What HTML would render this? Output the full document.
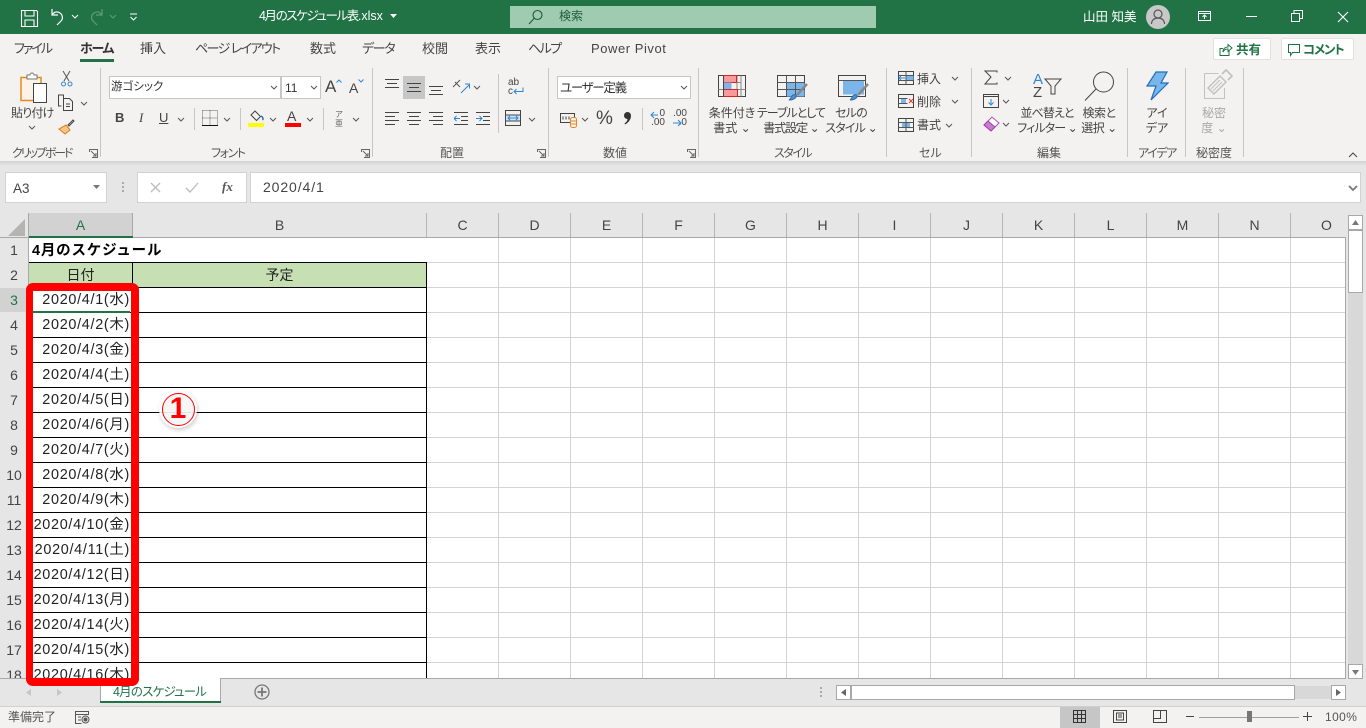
<!DOCTYPE html>
<html lang="ja"><head><meta charset="utf-8"><title>4月のスケジュール表.xlsx</title>
<style>
html,body{margin:0;padding:0;width:1366px;height:728px;overflow:hidden;background:#fff}
body{position:relative;font-family:"Liberation Sans","Noto Sans CJK JP",sans-serif;color:#444}
.a,.t,svg{position:absolute}
.t{white-space:nowrap;font-size:12px;line-height:16px;color:#444;font-feature-settings:"palt"}
.c{transform:translateX(-50%)}
.tb{font-size:13px;color:#444;top:41px}
.k{letter-spacing:-1.2px}
.g{font-size:12px;color:#555;top:145px}
.sep{position:absolute;width:1px;background:#c6c6c6;top:68px;height:89px}
.hd{position:absolute;top:213px;height:24px;line-height:25px;text-align:center;font-size:14px;color:#444;background:#e6e6e6;border-right:1px solid #b5b5b5;box-sizing:content-box}
.rh{position:absolute;left:0;width:28px;height:24px;line-height:24px;text-align:center;font-size:14px;color:#444;background:#e6e6e6}
.d{position:absolute;left:20px;width:110px;text-align:right;height:24px;line-height:24px;font-size:14.4px;color:#222;white-space:nowrap;letter-spacing:.7px}
.s{fill:none;stroke:#444;stroke-width:1}
</style></head><body>

<!-- title bar -->
<div class="a" style="left:0;top:0;width:1366px;height:34px;background:#217346"></div>
<svg style="left:20px;top:8px" width="20" height="20" viewBox="0 0 20 20" fill="none" stroke="#fff" stroke-width="1.1"><path d="M1.5 2.5h15l1 1v15h-16z"/><path d="M5 2.500v5.500h9v-5.500M5 18.500v-6.500h9v6.500"/></svg>
<svg style="left:50px;top:8px" width="16" height="19" viewBox="0 0 16 19" fill="none" stroke="#fff" stroke-width="1.2"><path d="M2 1v6h6"/><path d="M2 7c2-3 5-4 8-2 3 2 3 6 1 8l-4 4"/></svg>
<svg style="left:71px;top:14px" width="8" height="5" fill="none" stroke="#fff"><path d="M1 1l3 3 3-3"/></svg>
<svg style="left:88px;top:8px" width="16" height="19" viewBox="0 0 16 19" fill="none" stroke="#5d9c78" stroke-width="1.2"><path d="M14 1v6h-6"/><path d="M14 7c-2-3-5-4-8-2-3 2-3 6-1 8l4 4"/></svg>
<svg style="left:109px;top:14px" width="8" height="5" fill="none" stroke="#5d9c78"><path d="M1 1l3 3 3-3"/></svg>
<svg style="left:129px;top:13px" width="9" height="8" fill="none" stroke="#fff"><path d="M1 1h7M1.500 4l3 3 3-3"/></svg>
<div class="t" style="left:259px;top:8px;color:#fff;font-size:12.5px"><span style="letter-spacing:-1.400px">4月のスケジュール表</span>.xlsx</div>
<svg style="left:390px;top:14px" width="7" height="5"><path d="M0 0h7l-3.500 4z" fill="#fff"/></svg>
<div class="a" style="left:510px;top:6px;width:366px;height:22px;background:#9fcbb1"></div>
<svg style="left:528px;top:9px" width="16" height="16" fill="none" stroke="#1a5c38" stroke-width="1.1"><circle cx="9.500" cy="6" r="4.500"/><path d="M6 9.500L1 15"/></svg>
<div class="t" style="left:559px;top:8px;color:#1f5c3a;font-size:12px">検索</div>
<div class="t" style="left:1083px;top:9px;color:#fff;font-size:12.500px">山田 知美</div>
<div class="a" style="left:1146px;top:5px;width:24px;height:24px;border-radius:50%;background:#c8c8c8"></div>
<svg style="left:1149px;top:8px" width="18" height="18" fill="none" stroke="#555" stroke-width="1.200"><circle cx="9" cy="6" r="4"/><path d="M2.500 16c0-4 3-6 6.500-6s6.500 2 6.500 6"/></svg>
<svg style="left:1198px;top:10px" width="14" height="12" fill="none" stroke="#fff"><path d="M.5 1.500h12v9h-12zM.5 3.500h12M6.500 9V5M4.500 7l2-2 2 2"/></svg>
<div class="a" style="left:1246px;top:16px;width:11px;height:1px;background:#fff"></div>
<svg style="left:1291px;top:10px" width="12" height="12" fill="none" stroke="#fff"><path d="M.5 3.500h8v8h-8zM3 3.500v-3h8.500v8h-3"/></svg>
<svg style="left:1337px;top:11px" width="12" height="12" fill="none" stroke="#fff" stroke-width="1.100"><path d="M1 1l10 10M11 1L1 11"/></svg>

<!-- ribbon -->
<div class="a" style="left:0;top:34px;width:1366px;height:127px;background:#f3f2f1"></div>
<div class="a" style="left:0;top:161px;width:1366px;height:52px;background:#e6e6e6"></div>
<div class="a" style="left:0;top:161px;width:1366px;height:5px;background:linear-gradient(#d2d2d2,#e6e6e6)"></div>
<div class="t tb" style="left:14px;letter-spacing:-2px">ファイル</div>
<div class="t tb" style="left:80px;font-weight:bold;color:#333;letter-spacing:-1.300px">ホーム</div>
<div class="a" style="left:80px;top:59px;width:34px;height:3px;background:#217346"></div>
<div class="t tb" style="left:140px">挿入</div>
<div class="t tb" style="left:195px;letter-spacing:-1.600px">ページ レイアウト</div>
<div class="t tb" style="left:310px">数式</div>
<div class="t tb" style="left:362px;letter-spacing:-1.300px">データ</div>
<div class="t tb" style="left:422px">校閲</div>
<div class="t tb" style="left:475px">表示</div>
<div class="t tb" style="left:528px;letter-spacing:-1.600px">ヘルプ</div>
<div class="t tb" style="left:591px;letter-spacing:.55px">Power Pivot</div>

<div class="a" style="left:1213px;top:38px;width:58px;height:22px;background:#fff;border:1px solid #e1e1e1;box-sizing:border-box;border-radius:2px"></div>
<svg style="left:1219px;top:43px" width="14" height="14" fill="none" stroke="#217346"><path d="M10 7.500v5h-9v-7h3"/><path d="M4 9c0-3 2-5 5-5V1.500l4 3.500-4 3.500V6C7 6 5 7 4 9z"/></svg>
<div class="t" style="left:1236px;top:42px;color:#217346;font-weight:bold;font-size:12.500px">共有</div>
<div class="a" style="left:1281px;top:38px;width:73px;height:22px;background:#fff;border:1px solid #e1e1e1;box-sizing:border-box;border-radius:2px"></div>
<svg style="left:1288px;top:44px" width="13" height="13" fill="none" stroke="#217346"><path d="M.5.500h11v8h-7l-2 3v-3h-2z"/></svg>
<div class="t" style="left:1303px;top:42px;color:#217346;font-weight:bold;font-size:12.500px;letter-spacing:-1.200px">コメント</div>

<!-- ribbon separators -->
<div class="sep" style="left:100px"></div><div class="sep" style="left:372px"></div><div class="sep" style="left:548px"></div><div class="sep" style="left:698px"></div><div class="sep" style="left:886px"></div><div class="sep" style="left:971px"></div><div class="sep" style="left:1127px"></div><div class="sep" style="left:1185px"></div><div class="sep" style="left:1243px"></div>
<div class="sep" style="left:194px;top:108px;height:22px"></div><div class="sep" style="left:240px;top:108px;height:22px"></div><div class="sep" style="left:323px;top:108px;height:22px"></div><div class="sep" style="left:498px;top:74px;height:59px"></div><div class="sep" style="left:642px;top:108px;height:22px"></div>

<!-- clipboard -->
<svg style="left:20px;top:71px" width="28" height="32" fill="none"><path d="M1 6.500h20v23H1z" stroke="#e8891e" stroke-width="1.500" fill="#fbf3e8"/><path d="M7 6V4h3a2 2 0 0 1 4 0h3v4H7z" fill="#fff" stroke="#777"/><path d="M13.500 12.500h13v19h-13z" fill="#fff" stroke="#444"/></svg>
<div class="t" style="left:11px;top:105px;font-size:12px;letter-spacing:-.8px">貼り付け</div>
<svg style="left:28px;top:125px" width="8" height="5" fill="none" stroke="#555"><path d="M1 1l3 3 3-3"/></svg>
<svg style="left:60px;top:70px" width="14" height="18" fill="none" stroke="#555"><path d="M3 1l6 10M10 1L4 11"/><circle cx="3.500" cy="14" r="2" stroke="#2b88d8"/><circle cx="10" cy="14" r="2" stroke="#2b88d8"/></svg>
<svg style="left:57px;top:94px" width="18" height="18" fill="none" stroke="#444"><path d="M6.500 5.500V1h-5v11h3"/><path d="M6.500 4.500h6l3 3v9h-9zM9 10h4M9 12.500h4"/></svg>
<svg style="left:80px;top:101px" width="8" height="5" fill="none" stroke="#555"><path d="M1 1l3 3 3-3"/></svg>
<svg style="left:58px;top:118px" width="17" height="17" fill="none"><path d="M1 11l7-4 4 5-5 4z" fill="#f6c58a" stroke="#d97c10"/><path d="M10 7l5-5 1 1-5 5z" stroke="#444"/></svg>
<div class="t g" style="left:12px;letter-spacing:-2.100px">クリップボード</div>
<svg style="left:89px;top:149px" width="9" height="9" fill="none" stroke="#666"><path d="M.500 3V.500H8.500V8.500H3M2 2l5 5M4 7h3V4"/></svg>

<!-- font -->
<div class="a" style="left:109px;top:76px;width:172px;height:23px;background:#fff;border:1px solid #c6c6c6;box-sizing:border-box"></div>
<div class="t" style="left:111px;top:79px;font-size:11.500px;color:#333">游ゴシック</div>
<svg style="left:270px;top:85px" width="8" height="5" fill="none" stroke="#555"><path d="M1 1l3 3 3-3"/></svg>
<div class="a" style="left:281px;top:76px;width:40px;height:23px;background:#fff;border:1px solid #c6c6c6;box-sizing:border-box"></div>
<div class="t" style="left:285px;top:80px;font-size:12px;color:#333">11</div>
<svg style="left:310px;top:85px" width="8" height="5" fill="none" stroke="#555"><path d="M1 1l3 3 3-3"/></svg>
<div class="t" style="left:325px;top:77px;font-size:17px;line-height:20px">A</div>
<svg style="left:336px;top:79px" width="6" height="4" fill="none" stroke="#2b88d8"><path d="M.5 3.500l2.500-2.500 2.500 2.500"/></svg>
<div class="t" style="left:349px;top:79px;font-size:14px;line-height:18px">A</div>
<svg style="left:358px;top:79px" width="6" height="4" fill="none" stroke="#2b88d8"><path d="M.5.500l2.500 2.500 2.500-2.500"/></svg>
<div class="t" style="left:115px;top:110px;font-weight:bold;font-size:13px;font-family:'Liberation Sans',sans-serif">B</div>
<div class="t" style="left:139px;top:110px;font-style:italic;font-size:13px;font-family:'Liberation Serif',serif">I</div>
<div class="t" style="left:159px;top:110px;font-size:13px;text-decoration:underline">U</div>
<svg style="left:177px;top:117px" width="8" height="5" fill="none" stroke="#555"><path d="M1 1l3 3 3-3"/></svg>
<svg style="left:202px;top:110px" width="16" height="16"><path d="M.5.500h15v15M.5.500v15M8 .500v15M.5 8h15" fill="none" stroke="#666" stroke-dasharray="1 1"/><path d="M0 15.500h16" stroke="#111"/></svg>
<svg style="left:223px;top:117px" width="8" height="5" fill="none" stroke="#555"><path d="M1 1l3 3 3-3"/></svg>
<svg style="left:249px;top:110px" width="16" height="13" fill="none" stroke="#444"><path d="M6 1l5.500 5.500-4 4L2 5z"/><path d="M12 6c2 1 2.500 3 1.500 4" stroke="#2b6cb0" stroke-width="1.500"/></svg>
<div class="a" style="left:248px;top:123px;width:16px;height:4px;background:#ff0"></div>
<svg style="left:269px;top:117px" width="8" height="5" fill="none" stroke="#555"><path d="M1 1l3 3 3-3"/></svg>
<div class="t" style="left:287px;top:108px;font-size:14px;line-height:16px">A</div>
<div class="a" style="left:285px;top:123px;width:16px;height:4px;background:#f00"></div>
<svg style="left:306px;top:117px" width="8" height="5" fill="none" stroke="#555"><path d="M1 1l3 3 3-3"/></svg>
<div class="t" style="left:335px;top:110px;font-size:8px;line-height:9px;color:#666;text-align:center">ア<br>亜</div>
<svg style="left:352px;top:117px" width="8" height="5" fill="none" stroke="#555"><path d="M1 1l3 3 3-3"/></svg>
<div class="t g" style="left:211px;letter-spacing:-1.400px">フォント</div>
<svg style="left:361px;top:149px" width="9" height="9" fill="none" stroke="#666"><path d="M.500 3V.500H8.500V8.500H3M2 2l5 5M4 7h3V4"/></svg>

<!-- align -->
<div class="a" style="left:403px;top:76px;width:22px;height:23px;background:#c6c6c6"></div>
<svg style="left:385px;top:76px" width="60" height="24" fill="none" stroke="#444"><path d="M0 3.500h14M2 7.500h10M0 11.500h14"/><path d="M22 7.500h14M24 11.500h10M22 15.500h14"/><path d="M44 10.500h14M46 14.500h10M44 18.500h14"/></svg>
<svg style="left:385px;top:112px" width="60" height="14" fill="none" stroke="#444"><path d="M0 .500h14M0 4.500h10M0 8.500h14M0 12.500h10"/><path d="M22 .500h14M24 4.500h10M22 8.500h14M24 12.500h10"/><path d="M44 .500h14M48 4.500h10M44 8.500h14M48 12.500h10"/></svg>
<svg style="left:452px;top:78px" width="20" height="18" fill="none" stroke="#555"><path d="M1 9l7-7M3 4l5 5"/><path d="M9 15l8-8M13 6h4.500v4.500" stroke="#2b88d8"/></svg>
<svg style="left:473px;top:85px" width="8" height="5" fill="none" stroke="#555"><path d="M1 1l3 3 3-3"/></svg>
<svg style="left:454px;top:112px" width="36" height="14" fill="none" stroke="#444"><path d="M0 .500h14M7 4.500h7M7 8.500h7M0 12.500h14"/><path d="M22 .500h14M29 4.500h7M29 8.500h7M22 12.500h14"/><path d="M6 6.500H0M2.500 4L0 6.500 2.500 9M22 6.500h6M25.500 4l2.500 2.500L25.500 9" stroke="#2b88d8"/></svg>
<div class="t" style="left:508px;top:78px;font-size:10px;line-height:9px;color:#444">ab<br>c</div>
<svg style="left:512px;top:87px" width="12" height="9" fill="none" stroke="#2b88d8"><path d="M11 .500v4H2M4.500 2L2 4.500 4.500 7"/></svg>
<svg style="left:505px;top:110px" width="17" height="16" fill="none" stroke="#444"><path d="M.5.500h15v15H.5z"/><path d="M.5 5h15M.5 11h15"/><path d="M1 5.500h14v5H1z" fill="#cfe4f7" stroke="none"/><path d="M3 8h10M5 6l-2 2 2 2M11 6l2 2-2 2" stroke="#2b88d8"/></svg>
<svg style="left:528px;top:117px" width="8" height="5" fill="none" stroke="#555"><path d="M1 1l3 3 3-3"/></svg>
<div class="t g" style="left:440px">配置</div>
<svg style="left:537px;top:149px" width="9" height="9" fill="none" stroke="#666"><path d="M.500 3V.500H8.500V8.500H3M2 2l5 5M4 7h3V4"/></svg>

<!-- number -->
<div class="a" style="left:557px;top:76px;width:134px;height:23px;background:#fff;border:1px solid #c6c6c6;box-sizing:border-box"></div>
<div class="t" style="left:560px;top:80px;font-size:12.500px;color:#333;letter-spacing:-1.300px">ユーザー定義</div>
<svg style="left:680px;top:85px" width="8" height="5" fill="none" stroke="#555"><path d="M1 1l3 3 3-3"/></svg>
<svg style="left:560px;top:113px" width="18" height="15" fill="none" stroke="#444"><path d="M.5.500h14v9H.5z"/><path d="M3 3.500v3M6 3.500v3M9 3.500v3" /><rect x="10.500" y="4.500" width="6" height="10" rx="2" fill="#f3f2f1" stroke="#e8891e"/><path d="M10.500 8h6M10.500 11h6" stroke="#e8891e"/></svg>
<svg style="left:581px;top:117px" width="8" height="5" fill="none" stroke="#555"><path d="M1 1l3 3 3-3"/></svg>
<div class="t" style="left:596px;top:108px;font-size:19px;line-height:22px">%</div>
<svg style="left:623px;top:112px" width="10" height="14"><path d="M1 3.500a3.500 3.500 0 1 1 7 0c0 4-2.500 7-6 9l-.5-1c2-1.500 3-3 3-4.500C2.500 7 1 5.500 1 3.500z" fill="#333"/></svg>
<div class="t" style="left:640px;width:25px;top:109px;font-size:10px;line-height:9px;text-align:right;color:#444">0<br>.00</div>
<svg style="left:650px;top:111px" width="9" height="8" fill="none" stroke="#2b88d8"><path d="M8 4H1M4 1L1 4l3 3"/></svg>
<div class="t" style="left:662px;width:25px;top:109px;font-size:10px;line-height:9px;text-align:right;color:#444">.00<br>.0</div>
<svg style="left:672px;top:119px" width="10" height="8" fill="none" stroke="#2b88d8"><path d="M1 4h8M6 1l3 3-3 3"/></svg>
<div class="t g" style="left:603px">数値</div>
<svg style="left:687px;top:149px" width="9" height="9" fill="none" stroke="#666"><path d="M.500 3V.500H8.500V8.500H3M2 2l5 5M4 7h3V4"/></svg>

<!-- styles -->
<svg style="left:718px;top:75px" width="28" height="22" fill="none"><path d="M.5.500h27v21H.5z" stroke="#444"/><path d="M5.500 7.500h17M.5 14.500h27M19 .500v21M23 .500v21" stroke="#888"/><path d="M5.500.500h13v7h-13z" fill="#f79a9a" stroke="#d22"/><path d="M5.500 7.500h8v7h-8z" fill="#7ab6ea"/><path d="M5.500 14.500h14v7h-14z" fill="#f79a9a" stroke="#d22"/><path d="M5.500.500v21" stroke="#444"/></svg>
<div class="t c" style="left:732px;top:105.500px;font-size:12px;line-height:15px;text-align:center">条件付き<br>書式 ⌄</div>
<svg style="left:777px;top:75px" width="32" height="27" fill="none"><path d="M.5.500h27v21H.5z" stroke="#444"/><path d="M9.500 7.500h18v14h-18z" fill="#7ab6ea"/><path d="M.5 7.500h27M.5 14.500h27M9.500.500v21M18.500.500v21" stroke="#555"/><path d="M30 9l-10 11" stroke="#888" stroke-width="2.500"/><path d="M12 25c3 0 6-1 7-3 1-2-1-3-3-2-2 1-2 4-4 5z" fill="#4a90d9" stroke="#2f6ea8"/></svg>
<div class="t c" style="left:791px;top:105.500px;font-size:12px;line-height:15px;text-align:center;letter-spacing:-1px">テーブルとして<br>書式設定 ⌄</div>
<svg style="left:838px;top:75px" width="32" height="27" fill="none"><path d="M.5.500h27v21H.5z" stroke="#444"/><path d="M5 5.500h21v14H5z" fill="#7ab6ea"/><path d="M.5 5.500h27" stroke="#555"/><path d="M30 9l-10 11" stroke="#888" stroke-width="2.500"/><path d="M12 25c3 0 6-1 7-3 1-2-1-3-3-2-2 1-2 4-4 5z" fill="#4a90d9" stroke="#2f6ea8"/></svg>
<div class="t c" style="left:851px;top:105.500px;font-size:12px;line-height:15px;text-align:center;letter-spacing:-.8px">セルの<br>スタイル ⌄</div>
<div class="t g" style="left:774px;letter-spacing:-1.500px">スタイル</div>

<!-- cells -->
<svg style="left:898px;top:71px" width="17" height="14" fill="none"><path d="M.5.500h15v13H.5z" stroke="#444"/><path d="M8 4.500h7.500v5H8z" fill="#7ab6ea"/><path d="M.5 4.500h15M.5 9.500h15M8 .500v13" stroke="#555"/><path d="M1 7h6M3 5L1 7l2 2" stroke="#2b88d8"/></svg>
<div class="t" style="left:917px;top:71px">挿入</div>
<svg style="left:951px;top:76px" width="8" height="5" fill="none" stroke="#555"><path d="M1 1l3 3 3-3"/></svg>
<svg style="left:898px;top:94px" width="17" height="14" fill="none"><path d="M.5.500h15v13H.5z" stroke="#444"/><path d="M3 4.500h5v5H3z" fill="#7ab6ea"/><path d="M.5 4.500h9M.5 9.500h9" stroke="#555"/><path d="M11 5l4 4M15 5l-4 4" stroke="#e33"/></svg>
<div class="t" style="left:917px;top:94px">削除</div>
<svg style="left:951px;top:99px" width="8" height="5" fill="none" stroke="#555"><path d="M1 1l3 3 3-3"/></svg>
<svg style="left:898px;top:117px" width="17" height="15" fill="none"><path d="M.5 1.500h15v13H.5z" stroke="#444"/><path d="M4 5.500h8v5H4z" fill="#7ab6ea"/><path d="M.5 5.500h15M.5 10.500h15M8 1.500v13" stroke="#555"/></svg>
<div class="t" style="left:917px;top:117px">書式</div>
<svg style="left:945px;top:123px" width="8" height="5" fill="none" stroke="#555"><path d="M1 1l3 3 3-3"/></svg>
<div class="t g" style="left:919px">セル</div>

<!-- editing -->
<svg style="left:984px;top:70px" width="14" height="15" fill="none" stroke="#444"><path d="M13 2.500V1H1l6 6-6 7h12v-1.500"/></svg>
<svg style="left:1004px;top:76px" width="8" height="5" fill="none" stroke="#555"><path d="M1 1l3 3 3-3"/></svg>
<svg style="left:983px;top:94px" width="16" height="14" fill="none" stroke="#444"><path d="M.5.500h15v13H.5zM.5 2.500h15"/><path d="M8 5v6M5.500 8.500L8 11l2.500-2.500" stroke="#2b88d8"/></svg>
<svg style="left:1002px;top:99px" width="8" height="5" fill="none" stroke="#555"><path d="M1 1l3 3 3-3"/></svg>
<svg style="left:983px;top:116px" width="17" height="16" fill="none"><path d="M1 9l8-8 7 6-8 8z" fill="#fff" stroke="#b14fb8"/><path d="M1 9l4-4 7 6-4 4z" fill="#c77ccb" stroke="#a13fa8"/></svg>
<svg style="left:1002px;top:122px" width="8" height="5" fill="none" stroke="#555"><path d="M1 1l3 3 3-3"/></svg>
<div class="t" style="left:1033px;top:71px;font-size:15px;line-height:17px;color:#2b88d8">A</div>
<div class="t" style="left:1033px;top:84px;font-size:15px;line-height:17px;color:#444">Z</div>
<svg style="left:1044px;top:78px" width="19" height="18" fill="none" stroke="#444"><path d="M1 1h16l-6 7v8h-4V8z"/></svg>
<div class="t c" style="left:1047px;top:105.500px;font-size:12px;line-height:15px;text-align:center;letter-spacing:-.9px">並べ替えと<br>フィルター ⌄</div>
<svg style="left:1083px;top:71px" width="32" height="32" fill="none" stroke="#444"><circle cx="20.500" cy="11" r="10"/><path d="M13 18L2 29.500"/></svg>
<div class="t c" style="left:1099px;top:105.500px;font-size:12px;line-height:15px;text-align:center;letter-spacing:-.5px">検索と<br>選択 ⌄</div>
<div class="t g" style="left:1037px">編集</div>

<!-- ideas -->
<svg style="left:1145px;top:71px" width="24" height="30"><path d="M11 1h11l-6 11h7L6 29l5-14H2z" fill="#7ab6ea" stroke="#1f6fc0" stroke-width="1.200"/></svg>
<div class="t c" style="left:1157px;top:105.500px;font-size:12px;line-height:15px;text-align:center">アイ<br>デア</div>
<div class="t g" style="left:1138px;letter-spacing:-1.400px">アイデア</div>

<!-- sensitivity -->
<svg style="left:1203px;top:69px" width="30" height="31" fill="none" stroke="#c2c2c2"><path d="M1.500 4.500h14M1.500 4.500v25h20V19"/><path d="M5 19L17 7l6 6-12 12z" stroke-width="1.500"/><path d="M8 20l9-9M10 22l9-9"/><path d="M19 5l4-4 6 6-4 4" stroke-width="1.800"/></svg>
<div class="t c" style="left:1214px;top:105.500px;font-size:12px;line-height:15px;text-align:center;color:#a9a9a9">秘密<br>度 ⌄</div>
<div class="t g" style="left:1196px">秘密度</div>
<svg style="left:1348px;top:152px" width="10" height="6" fill="none" stroke="#444"><path d="M1 5l4-4 4 4"/></svg>

<!-- formula bar -->
<div class="a" style="left:5px;top:172px;width:102px;height:31px;background:#fff;border:1px solid #d2d2d2;box-sizing:border-box"></div>
<div class="t" style="left:13px;top:181px;font-size:13.500px">A3</div>
<svg style="left:93px;top:185px" width="8" height="4"><path d="M0 0h7l-3.500 4z" fill="#777"/></svg>
<div class="a" style="left:122px;top:182px;width:2px;height:2px;background:#aaa;box-shadow:0 4px #aaa,0 8px #aaa"></div>
<div class="a" style="left:137px;top:172px;width:110px;height:31px;background:#fff;border:1px solid #d2d2d2;box-sizing:border-box"></div>
<svg style="left:150px;top:182px" width="11" height="11" fill="none" stroke="#bbb" stroke-width="1.300"><path d="M1 1l9 9M10 1l-9 9"/></svg>
<svg style="left:185px;top:182px" width="14" height="11" fill="none" stroke="#bbb" stroke-width="1.300"><path d="M1 6l4 4 8-9"/></svg>
<div class="t" style="left:222px;top:179px;font-family:'Liberation Serif',serif;font-style:italic;font-weight:bold;font-size:13px;color:#555">fx</div>
<div class="a" style="left:250px;top:172px;width:1111px;height:31px;background:#fff;border:1px solid #d2d2d2;box-sizing:border-box"></div>
<div class="t" style="left:263px;top:179px;font-size:14px;letter-spacing:.9px">2020/4/1</div>
<svg style="left:1348px;top:185px" width="10" height="7" fill="none" stroke="#777" stroke-width="1.800"><path d="M1 1l4 4 4-4"/></svg>

<!-- column headers -->
<div class="a" style="left:0;top:213px;width:1346px;height:25px;background:#e6e6e6"></div>
<svg style="left:8px;top:219px" width="18" height="17"><path d="M17 0v17H0z" fill="#b4b4b4"/></svg>
<div class="a" style="left:29px;top:213px;width:103px;height:23px;line-height:25px;text-align:center;font-size:14px;color:#217346;background:#d2d2d2;border-right:1px solid #a8a8a8">A</div>
<div class="a" style="left:29px;top:236px;width:104px;height:2px;background:#217346"></div>
<div class="hd" style="left:133px;width:293px">B</div>
<div class="hd" style="left:427px;width:71px">C</div>
<div class="hd" style="left:499px;width:71px">D</div>
<div class="hd" style="left:571px;width:71px">E</div>
<div class="hd" style="left:643px;width:71px">F</div>
<div class="hd" style="left:715px;width:71px">G</div>
<div class="hd" style="left:787px;width:71px">H</div>
<div class="hd" style="left:859px;width:71px">I</div>
<div class="hd" style="left:931px;width:71px">J</div>
<div class="hd" style="left:1003px;width:71px">K</div>
<div class="hd" style="left:1075px;width:71px">L</div>
<div class="hd" style="left:1147px;width:71px">M</div>
<div class="hd" style="left:1219px;width:71px">N</div>
<div class="hd" style="left:1291px;width:71px;border:0;width:71px;background:#e6e6e6">O</div>
<div class="a" style="left:1346px;top:213px;width:20px;height:493px;background:#e6e6e6"></div>
<div class="a" style="left:0;top:237px;width:1345px;height:1px;background:#a8a8a8"></div>
<div class="a" style="left:29px;top:236px;width:104px;height:2px;background:#217346"></div>

<!-- grid -->
<div class="a" style="left:29px;top:238px;width:1316px;height:440px;background-color:#fff;background-image:repeating-linear-gradient(to bottom,transparent 0,transparent 24px,#d4d4d4 24px,#d4d4d4 25px)"></div>
<div class="a" style="left:427px;top:238px;width:918px;height:440px;background-image:repeating-linear-gradient(to right,transparent 0,transparent 71px,#d4d4d4 71px,#d4d4d4 72px)"></div>
<div class="a" style="left:1345px;top:237px;width:1px;height:441px;background:#a8a8a8"></div>

<!-- row headers -->
<div class="a" style="left:0;top:238px;width:29px;height:440px;background:#e6e6e6"></div>
<div class="rh" style="top:238px">1</div>
<div class="rh" style="top:263px">2</div>
<div class="rh" style="top:288px;color:#217346;background:#d2d2d2">3</div>
<div class="rh" style="top:313px">4</div>
<div class="rh" style="top:338px">5</div>
<div class="rh" style="top:363px">6</div>
<div class="rh" style="top:388px">7</div>
<div class="rh" style="top:413px">8</div>
<div class="rh" style="top:438px">9</div>
<div class="rh" style="top:463px">10</div>
<div class="rh" style="top:488px">11</div>
<div class="rh" style="top:513px">12</div>
<div class="rh" style="top:538px">13</div>
<div class="rh" style="top:563px">14</div>
<div class="rh" style="top:588px">15</div>
<div class="rh" style="top:613px">16</div>
<div class="rh" style="top:638px">17</div>
<div class="rh" style="top:663px;height:15px;overflow:hidden">18</div>
<div class="a" style="left:28px;top:213px;width:1px;height:465px;background:#a8a8a8"></div>

<!-- table -->
<div class="a" style="left:29px;top:263px;width:397px;height:24px;background:#c6e0b4"></div>
<div class="a" style="left:29px;top:262px;width:398px;height:416px;background-image:repeating-linear-gradient(to bottom,#000 0,#000 1px,transparent 1px,transparent 25px)"></div>
<div class="a" style="left:132px;top:262px;width:1px;height:416px;background:#000"></div>
<div class="a" style="left:426px;top:262px;width:1px;height:416px;background:#000"></div>
<div class="a" style="left:32px;top:239px;height:24px;line-height:24px;font-weight:bold;font-size:14.500px;letter-spacing:.8px;color:#000;white-space:nowrap">4月のスケジュール</div>
<div class="a" style="left:29px;top:263px;width:103px;height:24px;line-height:24px;text-align:center;font-size:14px;color:#222">日付</div>
<div class="a" style="left:133px;top:263px;width:293px;height:24px;line-height:24px;text-align:center;font-size:14px;color:#222">予定</div>
<div class="d" style="top:288px">2020/4/1(水)</div>
<div class="d" style="top:313px">2020/4/2(木)</div>
<div class="d" style="top:338px">2020/4/3(金)</div>
<div class="d" style="top:363px">2020/4/4(土)</div>
<div class="d" style="top:388px">2020/4/5(日)</div>
<div class="d" style="top:413px">2020/4/6(月)</div>
<div class="d" style="top:438px">2020/4/7(火)</div>
<div class="d" style="top:463px">2020/4/8(水)</div>
<div class="d" style="top:488px">2020/4/9(木)</div>
<div class="d" style="top:513px">2020/4/10(金)</div>
<div class="d" style="top:538px">2020/4/11(土)</div>
<div class="d" style="top:563px">2020/4/12(日)</div>
<div class="d" style="top:588px">2020/4/13(月)</div>
<div class="d" style="top:613px">2020/4/14(火)</div>
<div class="d" style="top:638px">2020/4/15(水)</div>
<div class="d" style="top:663px;height:15px;overflow:hidden">2020/4/16(木)</div>
<div class="a" style="left:33px;top:311px;width:97px;height:2px;background:#217346"></div>

<!-- bottom bars -->
<div class="a" style="left:0;top:678px;width:1346px;height:28px;background:#e6e6e6;border-top:1px solid #a8a8a8;box-sizing:border-box"></div>
<div class="a" style="left:0;top:706px;width:1366px;height:22px;background:#f3f2f1;border-top:1px solid #d0d0d0;box-sizing:border-box"></div>
<svg style="left:26px;top:689px" width="36" height="7"><path d="M5 0v7L0 3.500zM31 0v7l5-3.500z" fill="#c6c6c6"/></svg>
<div class="a" style="left:100px;top:678px;width:121px;height:25px;background:#fff;border:1px solid #a8a8a8;border-top:0;border-bottom:0;box-sizing:border-box"></div>
<div class="a" style="left:100px;top:701px;width:121px;height:2px;background:#217346"></div>
<div class="t" style="left:113px;top:684px;color:#217346;font-size:12.500px;letter-spacing:-.8px">4月のスケジュール</div>
<svg style="left:254px;top:684px" width="16" height="16" fill="none" stroke="#777" stroke-width="1.300"><circle cx="8" cy="8" r="7"/><path d="M8 3.500v9M3.500 8h9" stroke-width="1.800"/></svg>
<div class="a" style="left:820px;top:687px;width:2px;height:2px;background:#aaa;box-shadow:0 4px #aaa,0 8px #aaa"></div>
<div class="a" style="left:836px;top:685px;width:15px;height:15px;background:#fff;border:1px solid #a8a8a8;box-sizing:border-box"></div>
<svg style="left:841px;top:689px" width="5" height="7"><path d="M5 0v7L0 3.500z" fill="#666"/></svg>
<div class="a" style="left:851px;top:685px;width:444px;height:15px;background:#fff;border:1px solid #a8a8a8;box-sizing:border-box"></div>
<div class="a" style="left:1295px;top:686px;width:36px;height:13px;background:#d8d8d8"></div>
<div class="a" style="left:1331px;top:685px;width:15px;height:15px;background:#fff;border:1px solid #a8a8a8;box-sizing:border-box"></div>
<svg style="left:1336px;top:689px" width="5" height="7"><path d="M0 0v7l5-3.500z" fill="#666"/></svg>

<!-- vertical scrollbar -->
<div class="a" style="left:1348px;top:232px;width:15px;height:432px;background:#d8d8d8"></div>
<div class="a" style="left:1348px;top:215px;width:15px;height:15px;background:#fff;border:1px solid #a8a8a8;box-sizing:border-box"></div>
<svg style="left:1352px;top:220px" width="7" height="5"><path d="M0 5h7L3.500 0z" fill="#777"/></svg>
<div class="a" style="left:1348px;top:230px;width:15px;height:63px;background:#fff;border:1px solid #a8a8a8;box-sizing:border-box"></div>
<div class="a" style="left:1348px;top:664px;width:15px;height:15px;background:#fff;border:1px solid #a8a8a8;box-sizing:border-box"></div>
<svg style="left:1352px;top:670px" width="7" height="5"><path d="M0 0h7L3.500 5z" fill="#777"/></svg>

<!-- status bar -->
<div class="t" style="left:8px;top:709px;font-size:12px;color:#555">準備完了</div>
<svg style="left:75px;top:711px" width="15" height="13" fill="none" stroke="#555"><path d="M.5.500h13v3H.5zM.5 3.500v9h6M3 6h3M3 9h3"/><circle cx="10.500" cy="8.500" r="3.500"/><circle cx="10.500" cy="8.500" r="1.500" fill="#555"/></svg>
<div class="a" style="left:1060px;top:707px;width:40px;height:21px;background:#c6c6c6"></div>
<svg style="left:1073px;top:710px" width="14" height="14" fill="none" stroke="#333"><path d="M.5.500h12v12H.5zM.5 4.500h12M.5 8.500h12M4.500.500v12M8.500.500v12"/></svg>
<svg style="left:1113px;top:710px" width="15" height="14" fill="none" stroke="#444"><path d="M.5.500h13v12H.5zM3.500 3h7v7h-7zM5 5h4M5 7h4"/></svg>
<svg style="left:1153px;top:710px" width="15" height="14" fill="none" stroke="#444"><path d="M.5.500h13v12H.5zM.5 8.500h7V.500"/></svg>
<div class="a" style="left:1186px;top:716px;width:8px;height:1px;background:#444"></div>
<div class="a" style="left:1199px;top:717px;width:100px;height:1px;background:#a0a0a0"></div>
<div class="a" style="left:1247px;top:711px;width:5px;height:11px;background:#777"></div>
<svg style="left:1303px;top:712px" width="9" height="9" stroke="#444"><path d="M0 4.500h9M4.500 0v9"/></svg>
<div class="t" style="left:1325px;top:709px;font-size:12px;color:#555;letter-spacing:.4px">100%</div>

<!-- annotation -->
<div class="a" style="left:26px;top:283px;width:113px;height:403px;border:8px solid #f00;border-left-width:7.500px;border-radius:7px;box-sizing:border-box"></div>
<div class="a" style="left:159px;top:390px;width:38px;height:38px;border-radius:50%;background:rgba(255,255,255,.85);box-shadow:1px 2px 4px rgba(0,0,0,.2)"></div>
<div class="a" style="left:161.500px;top:392.500px;width:33px;height:33px;border-radius:50%;border:1.500px solid #f00;box-sizing:border-box;background:rgba(238,238,238,.5)"></div>
<div class="a" style="left:161px;top:392px;width:34px;line-height:34px;text-align:center;font-weight:bold;font-size:30px;color:#f00;font-family:'Liberation Sans',sans-serif">1</div>
</body></html>
